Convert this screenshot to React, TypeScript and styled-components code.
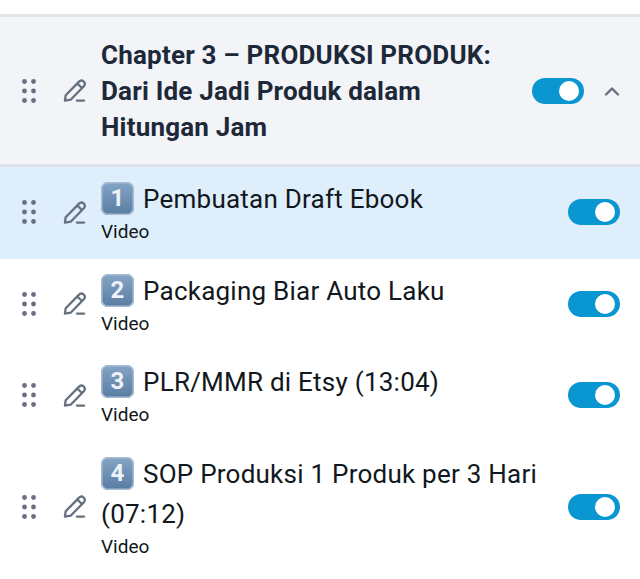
import React from 'react';
import styled, { createGlobalStyle } from 'styled-components';

const GlobalStyle = createGlobalStyle`
  html, body {
    margin: 0;
    padding: 0;
    background: #fff;
    font-family: Roboto, "Liberation Sans", sans-serif;
  }
`;

const lessons = [
  { id: 1, title: 'Pembuatan Draft Ebook', active: true },
  { id: 2, title: 'Packaging Biar Auto Laku' },
  { id: 3, title: 'PLR/MMR di Etsy (13:04)' },
  { id: 4, title: 'SOP Produksi 1 Produk per 3 Hari (07:12)' },
];

function DragIcon() {
  return (
    <svg width="14" height="24" viewBox="0 0 14 24" fill="#667080">
      <circle cx="2.5" cy="2.5" r="2.4" />
      <circle cx="11.5" cy="2.5" r="2.4" />
      <circle cx="2.5" cy="12" r="2.4" />
      <circle cx="11.5" cy="12" r="2.4" />
      <circle cx="2.5" cy="21.5" r="2.4" />
      <circle cx="11.5" cy="21.5" r="2.4" />
    </svg>
  );
}

function PencilIcon() {
  return (
    <svg width="23" height="23" viewBox="0 0 24 24" fill="none" stroke="#667080" strokeWidth="2.4" strokeLinecap="round" strokeLinejoin="round">
      <path d="M2 22.5 L2.8 17 L16.5 3 C18 1.4 20 1.2 21.6 2.6 C23.2 4.2 23 6.2 21.5 7.8 L8 21.6 Z" />
      <path d="M15 4.8 L19.8 9.4" />
      <path d="M14.5 22.5 H22" />
    </svg>
  );
}

function ChevronIcon() {
  return (
    <svg width="16" height="10" viewBox="0 0 16 10" fill="none" stroke="#667080" strokeWidth="2.4" strokeLinecap="round" strokeLinejoin="round">
      <path d="M2 8.5 L8 2.5 L14 8.5" />
    </svg>
  );
}

function App() {
  return (
    <Page>
      <GlobalStyle />
      <Chapter>
        <Handle>
          <DragIcon />
        </Handle>
        <EditBtn>
          <PencilIcon />
        </EditBtn>
        <ChapterTitle>Chapter 3 – PRODUKSI PRODUK: Dari Ide Jadi Produk dalam Hitungan Jam</ChapterTitle>
        <ChapterActions>
          <Toggle />
          <ChevronBtn>
            <ChevronIcon />
          </ChevronBtn>
        </ChapterActions>
      </Chapter>
      {lessons.map((lesson) => (
        <Lesson key={lesson.id} $active={lesson.active}>
          <Handle>
            <DragIcon />
          </Handle>
          <EditBtn>
            <PencilIcon />
          </EditBtn>
          <LessonBody>
            <LessonTitle>
              <Keycap>{lesson.id}</Keycap>
              {lesson.title}
            </LessonTitle>
            <LessonType>Video</LessonType>
          </LessonBody>
          <Toggle />
        </Lesson>
      ))}
    </Page>
  );
}

export default App;

const Page = styled.div`
  width: 640px;
  height: 579px;
  padding-top: 14px;
  box-sizing: border-box;
  overflow: hidden;
  background: #fff;
`;

const Chapter = styled.div`
  height: 153px;
  display: flex;
  align-items: center;
  padding: 0 20px 0 22px;
  box-sizing: border-box;
  background: #f2f4f7;
  border-top: 3px solid #e2e5e9;
  border-bottom: 3px solid #dfe2e6;
`;

const Handle = styled.div`
  width: 14px;
  height: 24px;
  flex: none;
  display: flex;
`;

const EditBtn = styled.div`
  width: 23px;
  height: 23px;
  margin: 0 15px 0 27px;
  flex: none;
  display: flex;
`;

const ChapterTitle = styled.h2`
  margin: 0;
  width: 400px;
  flex: none;
  font-size: 26px;
  line-height: 36px;
  font-weight: 700;
  letter-spacing: 0.2px;
  color: #1d2939;
`;

const ChapterActions = styled.div`
  display: flex;
  align-items: center;
  margin-left: auto;
  gap: 20px;
`;

const ChevronBtn = styled.div`
  display: flex;
  width: 16px;
`;

const Toggle = styled.div`
  width: 52px;
  height: 26px;
  flex: none;
  border-radius: 13px;
  background: #0a96d0;
  position: relative;
  &::after {
    content: '';
    position: absolute;
    top: 3px;
    right: 5px;
    width: 20px;
    height: 20px;
    border-radius: 50%;
    background: #fff;
  }
`;

const Lesson = styled.div<{ $active?: boolean }>`
  display: flex;
  align-items: center;
  padding: 12px 20px 13.5px 22px;
  background: ${({ $active }) => ($active ? '#dfeefb' : '#fff')};
`;

const LessonBody = styled.div`
  width: 450px;
  flex: none;
  margin-right: auto;
`;

const LessonTitle = styled.div`
  font-size: 26px;
  line-height: 40px;
  letter-spacing: 0.24px;
  color: #111820;
`;

const Keycap = styled.span`
  display: inline-block;
  width: 33px;
  height: 33px;
  margin: 3px 9px 0 0;
  border-radius: 7px;
  vertical-align: top;
  text-align: center;
  font-size: 24px;
  line-height: 33px;
  font-weight: 700;
  letter-spacing: 0;
  color: #eef3f8;
  background: linear-gradient(#86a5c6, #587ca1);
  box-shadow: inset 0 0 0 1.5px #a6bdd4;
`;

const LessonType = styled.div`
  font-size: 19px;
  line-height: 26px;
  color: #111820;
`;
